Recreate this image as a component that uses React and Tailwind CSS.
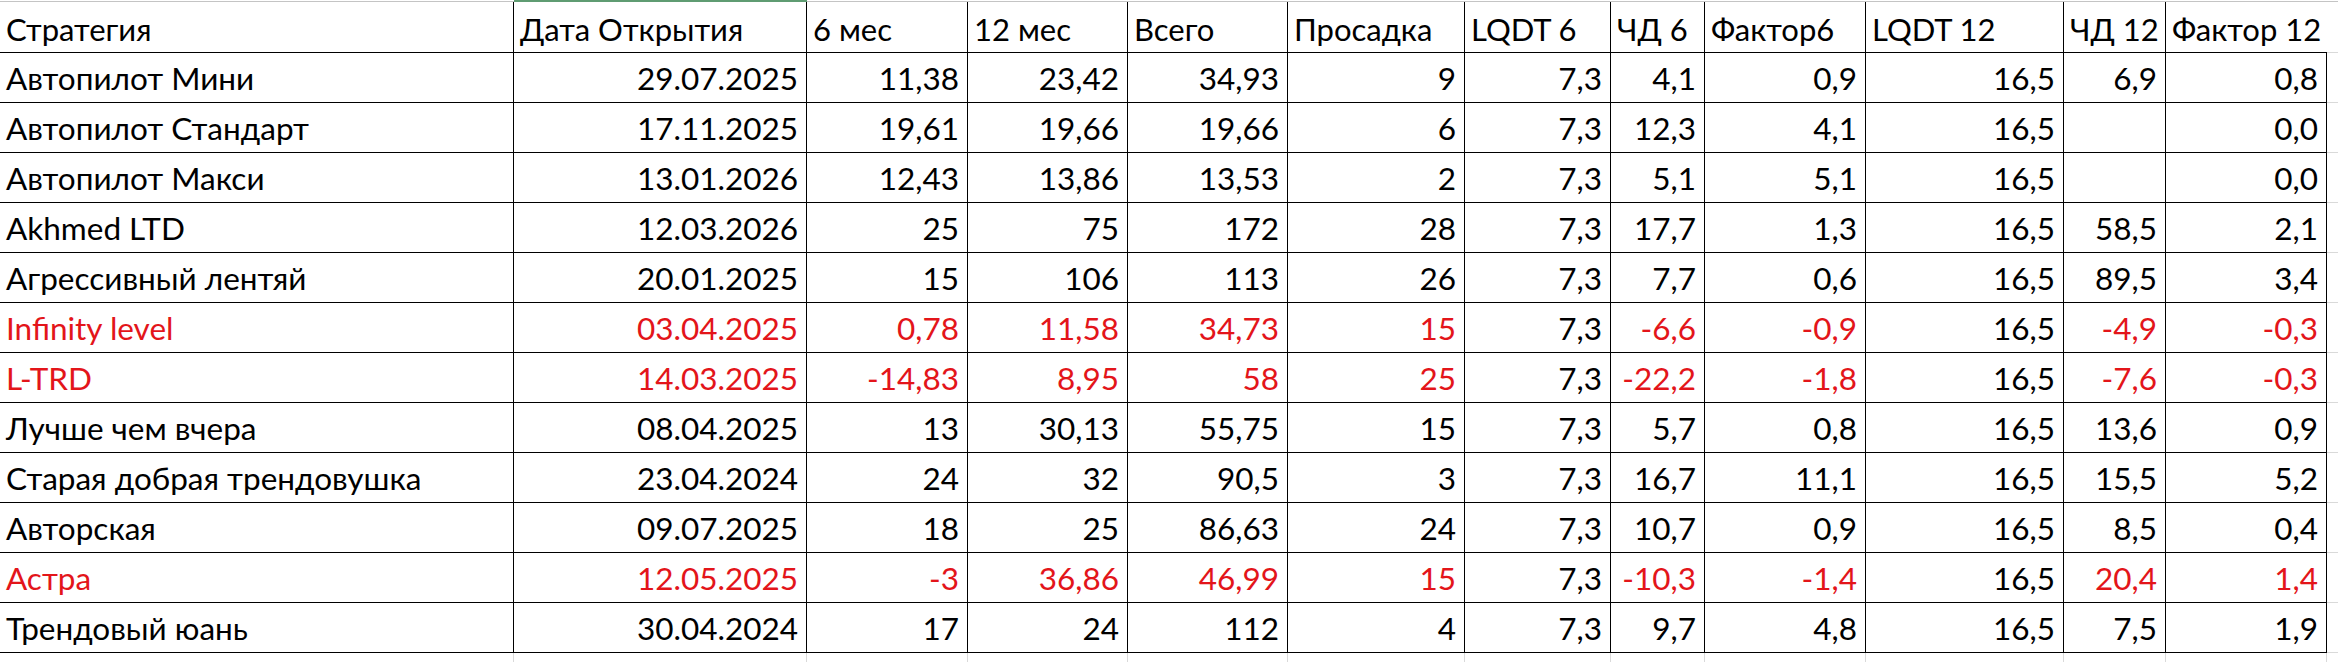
import React from "react";

const RED = "text-[#e3151a]";

const headers = [
  "Стратегия",
  "Дата Открытия",
  "6 мес",
  "12 мес",
  "Всего",
  "Просадка",
  "LQDT 6",
  "ЧД 6",
  "Фактор6",
  "LQDT 12",
  "ЧД 12",
  "Фактор 12",
];

const rows = [
  { red: false, c: ["Автопилот Мини", "29.07.2025", "11,38", "23,42", "34,93", "9", "7,3", "4,1", "0,9", "16,5", "6,9", "0,8"] },
  { red: false, c: ["Автопилот Стандарт", "17.11.2025", "19,61", "19,66", "19,66", "6", "7,3", "12,3", "4,1", "16,5", "", "0,0"] },
  { red: false, c: ["Автопилот Макси", "13.01.2026", "12,43", "13,86", "13,53", "2", "7,3", "5,1", "5,1", "16,5", "", "0,0"] },
  { red: false, c: ["Akhmed LTD", "12.03.2026", "25", "75", "172", "28", "7,3", "17,7", "1,3", "16,5", "58,5", "2,1"] },
  { red: false, c: ["Агрессивный лентяй", "20.01.2025", "15", "106", "113", "26", "7,3", "7,7", "0,6", "16,5", "89,5", "3,4"] },
  { red: true, c: ["Infinity level", "03.04.2025", "0,78", "11,58", "34,73", "15", "7,3", "-6,6", "-0,9", "16,5", "-4,9", "-0,3"] },
  { red: true, c: ["L-TRD", "14.03.2025", "-14,83", "8,95", "58", "25", "7,3", "-22,2", "-1,8", "16,5", "-7,6", "-0,3"] },
  { red: false, c: ["Лучше чем вчера", "08.04.2025", "13", "30,13", "55,75", "15", "7,3", "5,7", "0,8", "16,5", "13,6", "0,9"] },
  { red: false, c: ["Старая добрая трендовушка", "23.04.2024", "24", "32", "90,5", "3", "7,3", "16,7", "11,1", "16,5", "15,5", "5,2"] },
  { red: false, c: ["Авторская", "09.07.2025", "18", "25", "86,63", "24", "7,3", "10,7", "0,9", "16,5", "8,5", "0,4"] },
  { red: true, c: ["Астра", "12.05.2025", "-3", "36,86", "46,99", "15", "7,3", "-10,3", "-1,4", "16,5", "20,4", "1,4"] },
  { red: false, c: ["Трендовый юань", "30.04.2024", "17", "24", "112", "4", "7,3", "9,7", "4,8", "16,5", "7,5", "1,9"] },
];

const GRID =
  "grid grid-cols-[514px_293px_161px_160px_160px_177px_146px_94px_161px_198px_102px_161px_1fr]";

export default function App() {
  return (
    <div
      className="w-[2338px] h-[662px] bg-white overflow-hidden text-black"
      style={{ fontFamily: "Lato, 'Open Sans', 'Noto Sans', sans-serif" }}
    >
      {/* excel column header edge */}
      <div className={`${GRID} h-[2px]`}>
        {Array.from({ length: 13 }).map((_, i) =>
          i === 1 ? (
            <div key={i} className="h-[2px] bg-[#5f9c72]" />
          ) : (
            <div key={i} className="mt-[1px] h-[1px] bg-[#c4c4c4]" />
          )
        )}
      </div>

      {/* header */}
      <div className={`${GRID} h-[51px]`}>
        {headers.map((h, i) => (
          <div
            key={i}
            className={`h-[51px] border-b border-black whitespace-nowrap pl-[6px] pt-[4px] leading-[46px] text-[31px] ${
              i === 11 ? "overflow-visible relative z-10" : "border-r overflow-hidden"
            }`}
          >
            {h}
          </div>
        ))}
        <div className="h-[51px] border-b border-[#d9d9d9]" />
      </div>

      {/* data rows */}
      {rows.map((r, ri) => (
        <div key={ri} className={`${GRID} h-[50px]`}>
          {r.c.map((v, ci) => {
            const isRed = r.red && ci !== 6 && ci !== 9;
            return (
              <div
                key={ci}
                className={`h-[50px] border-b border-r border-black whitespace-nowrap overflow-hidden pt-[2px] leading-[47px] text-[31.5px] ${
                  ci === 0 ? "pl-[6px] text-left" : "pr-[8px] text-right"
                } ${isRed ? RED : ""}`}
              >
                {v}
              </div>
            );
          })}
          <div className="h-[50px] border-b border-[#d9d9d9]" />
        </div>
      ))}

      {/* empty gridline area below */}
      <div className={`${GRID} h-[12px]`}>
        {Array.from({ length: 13 }).map((_, i) => (
          <div
            key={i}
            className={`h-[12px] ${i < 12 ? "border-r border-[#d9d9d9]" : ""}`}
          />
        ))}
      </div>
    </div>
  );
}
